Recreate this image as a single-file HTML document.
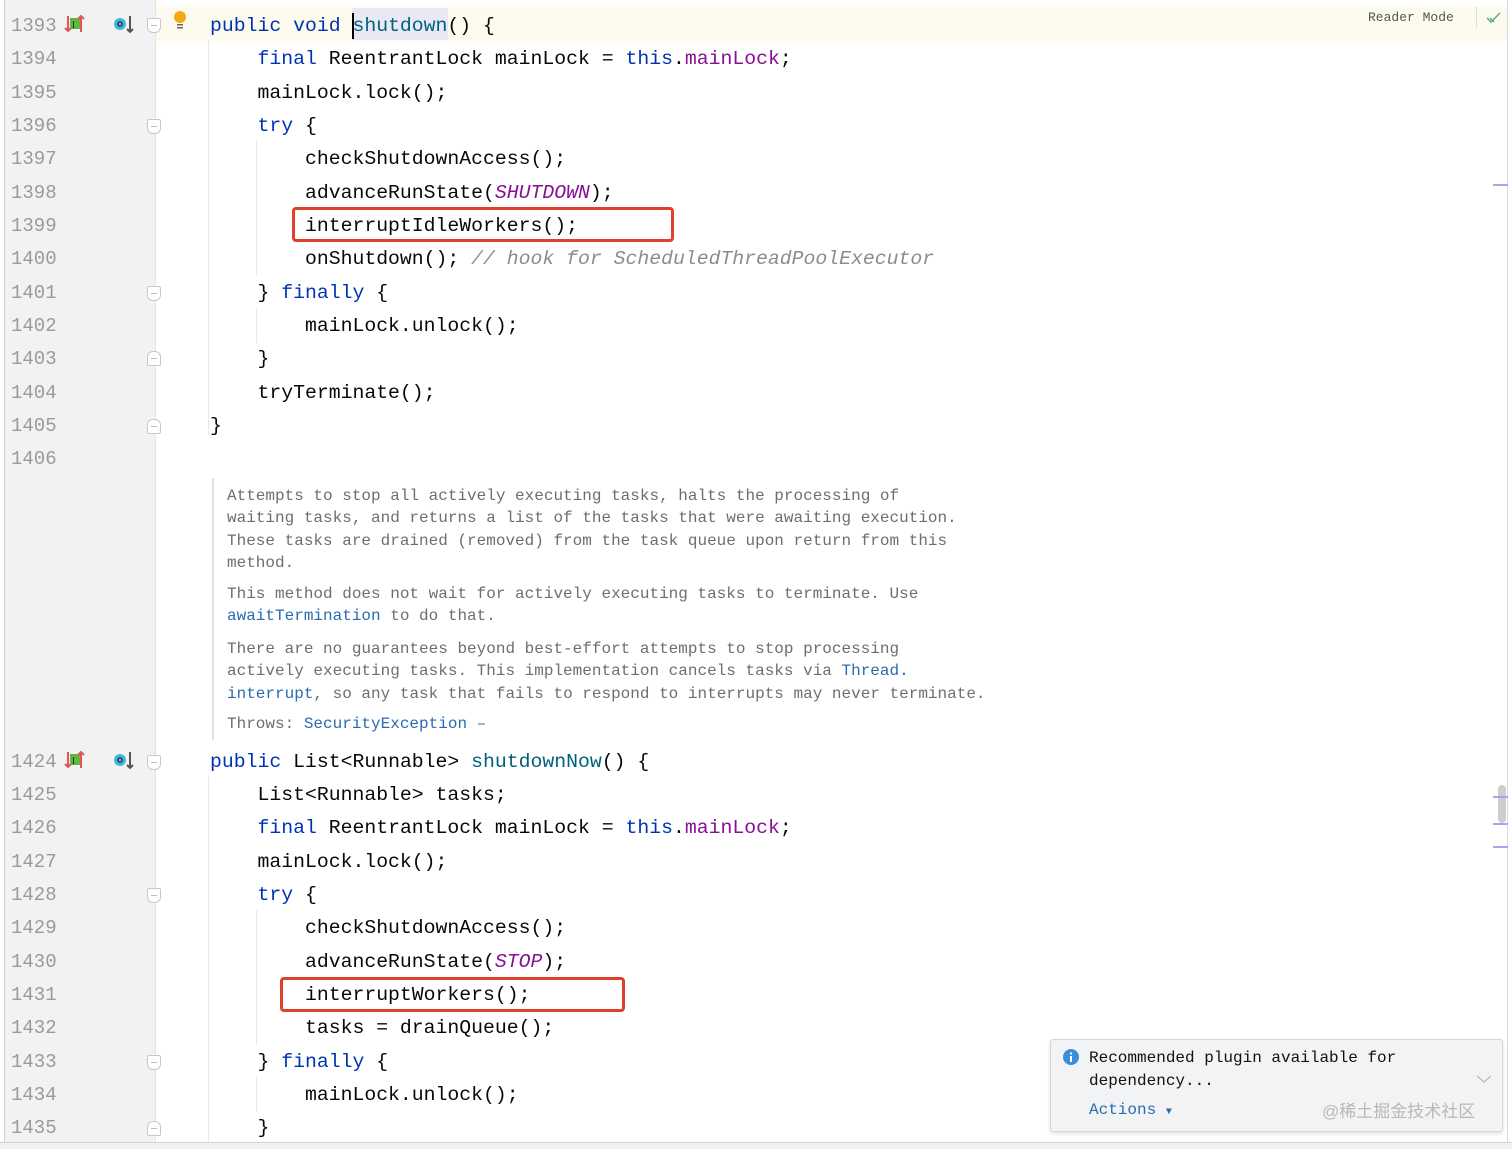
<!DOCTYPE html>
<html><head><meta charset="utf-8"><style>
body{margin:0;width:1512px;height:1148px;background:#fff;position:relative;overflow:hidden;font-family:"Liberation Mono","DejaVu Sans Mono",monospace}
.gut{position:absolute;left:4px;top:0;width:150px;height:1142px;background:#f2f2f2;border-left:1px solid #cfcfcf;border-right:1px solid #e4e4e4}
.ln{position:absolute;left:11px;font-size:19px;color:#9a9a9a;height:33.4px;line-height:33.4px;margin-top:2px}
.c{position:absolute;left:210px;font-size:19.8px;color:#080808;white-space:pre;height:33.4px;line-height:33.4px;margin-top:2px}
.k{color:#0033b3}.m{color:#00627a}.f{color:#871094}.s{color:#871094;font-style:italic}.cm{color:#8c8c8c;font-style:italic}
.doc{position:absolute;left:227px;font-size:16px;color:#6e6e6e;line-height:22.3px;white-space:pre;margin-top:1px}
.a{color:#2a6bb0}
.box{position:absolute;border:3px solid #e0412b;border-radius:4px}
.fold{position:absolute;left:147px;width:12px;height:13px;border:1px solid #c8c8c8;background:#fff;border-radius:2px 2px 6px 6px}
.fold::after{content:"";position:absolute;left:3px;top:6px;width:6px;height:1px;background:#bbb}
.guide{position:absolute;width:1px;background:#e8e8e8}
</style></head><body>
<div style="position:absolute;left:155px;top:7px;width:1352px;height:34px;background:#fdfbee"></div>
<div style="position:absolute;left:352px;top:8px;width:96px;height:32px;background:#e8e8f6"></div>
<div style="position:absolute;left:352px;top:13px;width:2px;height:26px;background:#000"></div>
<div class="gut"></div>
<div style="position:absolute;left:0;top:1142px;width:1512px;height:6px;background:#f2f2f2;border-top:1px solid #d0d0d0"></div>
<div style="position:absolute;left:1507px;top:0;width:1px;height:1142px;background:#d8d8d8"></div>
<div class="guide" style="left:208px;top:40px;height:395px"></div>
<div class="guide" style="left:256px;top:140px;height:135px"></div>
<div class="guide" style="left:256px;top:308px;height:35px"></div>
<div class="guide" style="left:208px;top:777px;height:365px"></div>
<div class="guide" style="left:256px;top:910px;height:135px"></div>
<div class="guide" style="left:256px;top:1077px;height:35px"></div>
<div class="guide" style="left:212px;top:478px;width:2px;height:262px;background:#e0e0e0"></div>

<div class="ln" style="top:8px">1393</div><div class="ln" style="top:41px">1394</div><div class="ln" style="top:75px">1395</div><div class="ln" style="top:108px">1396</div><div class="ln" style="top:141px">1397</div><div class="ln" style="top:175px">1398</div><div class="ln" style="top:208px">1399</div><div class="ln" style="top:241px">1400</div><div class="ln" style="top:275px">1401</div><div class="ln" style="top:308px">1402</div><div class="ln" style="top:341px">1403</div><div class="ln" style="top:375px">1404</div><div class="ln" style="top:408px">1405</div><div class="ln" style="top:441px">1406</div>
<div class="ln" style="top:744px">1424</div><div class="ln" style="top:777px">1425</div><div class="ln" style="top:810px">1426</div><div class="ln" style="top:844px">1427</div><div class="ln" style="top:877px">1428</div><div class="ln" style="top:910px">1429</div><div class="ln" style="top:944px">1430</div><div class="ln" style="top:977px">1431</div><div class="ln" style="top:1010px">1432</div><div class="ln" style="top:1044px">1433</div><div class="ln" style="top:1077px">1434</div><div class="ln" style="top:1110px">1435</div>

<svg style="position:absolute;left:64px;top:13px" width="22" height="22"><rect x="6" y="5" width="10" height="11" fill="#62b543"/><text x="8" y="15" font-size="9" font-family="Liberation Serif" fill="#222">I</text><path d="M4 3v15M1 15l3 3 3-3M17 19V3M14 6l3-3 3 3" stroke="#e05555" stroke-width="2" fill="none"/></svg>
<svg style="position:absolute;left:112px;top:13px" width="24" height="22"><circle cx="8" cy="11" r="6" fill="#40b6e0"/><circle cx="8" cy="11" r="2.2" fill="none" stroke="#333" stroke-width="1.4"/><path d="M18 3v16M15 16l3 3 3-3" stroke="#555" stroke-width="2" fill="none"/></svg>
<svg style="position:absolute;left:64px;top:749px" width="22" height="22"><rect x="6" y="5" width="10" height="11" fill="#62b543"/><text x="8" y="15" font-size="9" font-family="Liberation Serif" fill="#222">I</text><path d="M4 3v15M1 15l3 3 3-3M17 19V3M14 6l3-3 3 3" stroke="#e05555" stroke-width="2" fill="none"/></svg>
<svg style="position:absolute;left:112px;top:749px" width="24" height="22"><circle cx="8" cy="11" r="6" fill="#40b6e0"/><circle cx="8" cy="11" r="2.2" fill="none" stroke="#333" stroke-width="1.4"/><path d="M18 3v16M15 16l3 3 3-3" stroke="#555" stroke-width="2" fill="none"/></svg>
<svg style="position:absolute;left:172px;top:10px" width="16" height="20"><circle cx="8" cy="7" r="6" fill="#f4a913"/><rect x="5" y="14" width="6" height="1.5" fill="#666"/><rect x="5" y="17" width="6" height="1.5" fill="#666"/></svg>

<div class="fold" style="top:18px"></div><div class="fold" style="top:119px"></div><div class="fold" style="top:286px"></div><div class="fold" style="top:351px;border-radius:6px 6px 2px 2px"></div><div class="fold" style="top:419px;border-radius:6px 6px 2px 2px"></div>
<div class="fold" style="top:755px"></div><div class="fold" style="top:888px"></div><div class="fold" style="top:1055px"></div><div class="fold" style="top:1121px;border-radius:6px 6px 2px 2px"></div>

<div class="c" style="top:8px"><span class="k">public void </span><span class="m">shutdown</span>() {</div>
<div class="c" style="top:41px">    <span class="k">final</span> ReentrantLock mainLock = <span class="k">this</span>.<span class="f">mainLock</span>;</div>
<div class="c" style="top:75px">    mainLock.lock();</div>
<div class="c" style="top:108px">    <span class="k">try</span> {</div>
<div class="c" style="top:141px">        checkShutdownAccess();</div>
<div class="c" style="top:175px">        advanceRunState(<span class="s">SHUTDOWN</span>);</div>
<div class="c" style="top:208px">        interruptIdleWorkers();</div>
<div class="c" style="top:241px">        onShutdown(); <span class="cm">// hook for ScheduledThreadPoolExecutor</span></div>
<div class="c" style="top:275px">    } <span class="k">finally</span> {</div>
<div class="c" style="top:308px">        mainLock.unlock();</div>
<div class="c" style="top:341px">    }</div>
<div class="c" style="top:375px">    tryTerminate();</div>
<div class="c" style="top:408px">}</div>
<div class="box" style="left:292px;top:207px;width:376px;height:29px"></div>

<div class="doc" style="top:484px">Attempts to stop all actively executing tasks, halts the processing of
waiting tasks, and returns a list of the tasks that were awaiting execution.
These tasks are drained (removed) from the task queue upon return from this
method.</div>
<div class="doc" style="top:582px">This method does not wait for actively executing tasks to terminate. Use
<span class="a">awaitTermination</span> to do that.</div>
<div class="doc" style="top:637px">There are no guarantees beyond best-effort attempts to stop processing
actively executing tasks. This implementation cancels tasks via <span class="a">Thread.</span>
<span class="a">interrupt</span>, so any task that fails to respond to interrupts may never terminate.</div>
<div class="doc" style="top:712px">Throws: <span class="a">SecurityException</span> –</div>

<div class="c" style="top:744px"><span class="k">public</span> List&lt;Runnable&gt; <span class="m">shutdownNow</span>() {</div>
<div class="c" style="top:777px">    List&lt;Runnable&gt; tasks;</div>
<div class="c" style="top:810px">    <span class="k">final</span> ReentrantLock mainLock = <span class="k">this</span>.<span class="f">mainLock</span>;</div>
<div class="c" style="top:844px">    mainLock.lock();</div>
<div class="c" style="top:877px">    <span class="k">try</span> {</div>
<div class="c" style="top:910px">        checkShutdownAccess();</div>
<div class="c" style="top:944px">        advanceRunState(<span class="s">STOP</span>);</div>
<div class="c" style="top:977px">        interruptWorkers();</div>
<div class="c" style="top:1010px">        tasks = drainQueue();</div>
<div class="c" style="top:1044px">    } <span class="k">finally</span> {</div>
<div class="c" style="top:1077px">        mainLock.unlock();</div>
<div class="c" style="top:1110px">    }</div>
<div class="box" style="left:280px;top:977px;width:339px;height:29px"></div>

<div style="position:absolute;left:1368px;top:10px;font-size:13px;color:#555">Reader Mode</div>
<div style="position:absolute;left:1476px;top:6px;width:1px;height:22px;background:#ddd"></div>
<svg style="position:absolute;left:1486px;top:11px" width="16" height="14"><path d="M1 7l4 4 9-9M4 7l4 4" stroke="#4caf7a" stroke-width="1.4" fill="none"/></svg>
<div style="position:absolute;left:1493px;top:184px;width:15px;height:2px;background:#b79cf0"></div>
<div style="position:absolute;left:1498px;top:785px;width:8px;height:38px;background:#cdcdcd;border-radius:4px"></div>
<div style="position:absolute;left:1493px;top:796px;width:15px;height:2px;background:#b79cf0"></div>
<div style="position:absolute;left:1493px;top:823px;width:15px;height:2px;background:#b79cf0"></div>
<div style="position:absolute;left:1493px;top:846px;width:15px;height:2px;background:#b79cf0"></div>

<div style="position:absolute;left:1050px;top:1039px;width:451px;height:91px;background:#f2f3f5;border:1px solid #d6d6d6;border-radius:3px;box-shadow:0 2px 4px rgba(0,0,0,.12)"></div>
<svg style="position:absolute;left:1062px;top:1048px" width="18" height="18"><circle cx="9" cy="9" r="8" fill="#3a8fd9"/><rect x="8" y="8" width="2" height="6" fill="#fff"/><rect x="8" y="4.5" width="2" height="2" fill="#fff"/></svg>
<div style="position:absolute;left:1089px;top:1047px;font-size:16px;line-height:23px;color:#111;white-space:pre">Recommended plugin available for
dependency...</div>
<div style="position:absolute;left:1089px;top:1101px;font-size:16px;color:#2a6bb0">Actions <span style="font-size:10px">▼</span></div>
<svg style="position:absolute;left:1476px;top:1074px" width="16" height="10"><path d="M1 2l7 6 7-6" stroke="#bbb" stroke-width="1.3" fill="none"/></svg>
<div style="position:absolute;left:1322px;top:1097px;font-size:17px;color:#b8b8b8;font-family:'Liberation Sans','Noto Sans CJK SC',sans-serif">@稀土掘金技术社区</div>
</body></html>
